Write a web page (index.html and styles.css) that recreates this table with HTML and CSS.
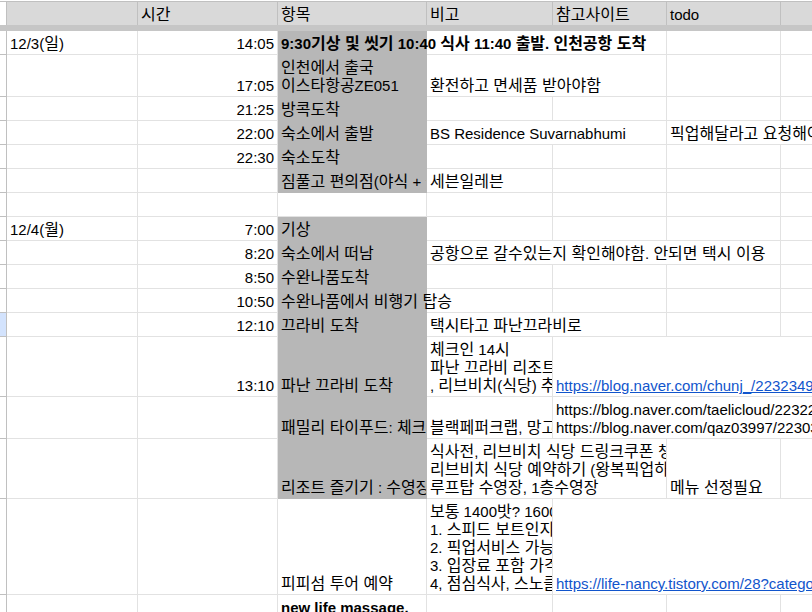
FILE: index.html
```html
<!DOCTYPE html>
<html lang="ko">
<head>
<meta charset="utf-8">
<title>여행 일정</title>
<link rel="stylesheet" href="styles.css">
</head>
<body>
<div class="sheet">
  <div class="row head">
    <div class="c rh"></div>
    <div class="c"></div>
    <div class="c"><span><span class="k">시간</span></span></div>
    <div class="c"><span><span class="k">항목</span></span></div>
    <div class="c"><span><span class="k">비고</span></span></div>
    <div class="c"><span><span class="k">참고사이트</span></span></div>
    <div class="c"><span>todo</span></div>
    <div class="c"></div>
  </div>
  <div class="band"></div>

  <div class="row">
    <div class="c rh"></div>
    <div class="c"><span>12/3(<span class="k">일</span>)</span></div>
    <div class="c r"><span>14:05</span></div>
    <div class="c f b ov"><span>9:30<span class="k">기상 및 씻기</span> 10:40 <span class="k">식사</span> 11:40 <span class="k">출발</span>. <span class="k">인천공항 도착</span></span></div>
    <div class="c s2"></div>
    <div class="c"></div>
    <div class="c"></div>
  </div>

  <div class="row l2">
    <div class="c rh"></div>
    <div class="c"></div>
    <div class="c r"><span>17:05</span></div>
    <div class="c f"><span><span class="k">인천에서 출국</span><br><span class="k">이스타항공</span>ZE051</span></div>
    <div class="c s2"><span><span class="k">환전하고 면세품 받아야함</span></span></div>
    <div class="c"></div>
    <div class="c"></div>
  </div>

  <div class="row">
    <div class="c rh"></div>
    <div class="c"></div>
    <div class="c r"><span>21:25</span></div>
    <div class="c f"><span><span class="k">방콕도착</span></span></div>
    <div class="c"></div>
    <div class="c"></div>
    <div class="c"></div>
    <div class="c"></div>
  </div>

  <div class="row">
    <div class="c rh"></div>
    <div class="c"></div>
    <div class="c r"><span>22:00</span></div>
    <div class="c f"><span><span class="k">숙소에서 출발</span></span></div>
    <div class="c s2"><span>BS Residence Suvarnabhumi</span></div>
    <div class="c s2"><span><span class="k">픽업해달라고 요청해야함</span></span></div>
  </div>

  <div class="row">
    <div class="c rh"></div>
    <div class="c"></div>
    <div class="c r"><span>22:30</span></div>
    <div class="c f"><span><span class="k">숙소도착</span></span></div>
    <div class="c"></div>
    <div class="c"></div>
    <div class="c"></div>
    <div class="c"></div>
  </div>

  <div class="row">
    <div class="c rh"></div>
    <div class="c"></div>
    <div class="c r"></div>
    <div class="c f"><span><span class="k">짐풀고 편의점</span>(<span class="k">야식</span> + <span class="k">물</span>)</span></div>
    <div class="c"><span><span class="k">세븐일레븐</span></span></div>
    <div class="c"></div>
    <div class="c"></div>
    <div class="c"></div>
  </div>

  <div class="row">
    <div class="c rh"></div>
    <div class="c"></div>
    <div class="c"></div>
    <div class="c"></div>
    <div class="c"></div>
    <div class="c"></div>
    <div class="c"></div>
    <div class="c"></div>
  </div>

  <div class="row">
    <div class="c rh"></div>
    <div class="c"><span>12/4(<span class="k">월</span>)</span></div>
    <div class="c r"><span>7:00</span></div>
    <div class="c f"><span><span class="k">기상</span></span></div>
    <div class="c"></div>
    <div class="c"></div>
    <div class="c"></div>
    <div class="c"></div>
  </div>

  <div class="row">
    <div class="c rh"></div>
    <div class="c"></div>
    <div class="c r"><span>8:20</span></div>
    <div class="c f"><span><span class="k">숙소에서 떠남</span></span></div>
    <div class="c s3"><span><span class="k">공항으로 갈수있는지 확인해야함</span>. <span class="k">안되면 택시 이용</span></span></div>
    <div class="c"></div>
  </div>

  <div class="row">
    <div class="c rh"></div>
    <div class="c"></div>
    <div class="c r"><span>8:50</span></div>
    <div class="c f"><span><span class="k">수완나품도착</span></span></div>
    <div class="c"></div>
    <div class="c"></div>
    <div class="c"></div>
    <div class="c"></div>
  </div>

  <div class="row">
    <div class="c rh"></div>
    <div class="c"></div>
    <div class="c r"><span>10:50</span></div>
    <div class="c f ov"><span><span class="k">수완나품에서 비행기 탑승</span></span></div>
    <div class="c"></div>
    <div class="c"></div>
    <div class="c"></div>
    <div class="c"></div>
  </div>

  <div class="row">
    <div class="c rh sel"></div>
    <div class="c"></div>
    <div class="c r"><span>12:10</span></div>
    <div class="c f"><span><span class="k">끄라비 도착</span></span></div>
    <div class="c s2"><span><span class="k">택시타고 파난끄라비로</span></span></div>
    <div class="c"></div>
    <div class="c"></div>
  </div>

  <div class="row l3">
    <div class="c rh"></div>
    <div class="c"></div>
    <div class="c r"><span>13:10</span></div>
    <div class="c f"><span><span class="k">파난 끄라비 도착</span></span></div>
    <div class="c"><span><span class="k">체크인</span> 14<span class="k">시</span><br><span class="k">파난 끄라비 리조트 체크인</span><br>, <span class="k">리브비치</span>(<span class="k">식당</span>) <span class="k">추천</span></span></div>
    <div class="c s3"><span><a class="lnk" href="#">https://blog.naver.com/chunj_/223234953812</a></span></div>
  </div>

  <div class="row l2">
    <div class="c rh"></div>
    <div class="c"></div>
    <div class="c"></div>
    <div class="c f"><span><span class="k">패밀리 타이푸드</span>: <span class="k">체크인 후 점심</span></span></div>
    <div class="c"><span><span class="k">블랙페퍼크랩</span>, <span class="k">망고스틴</span></span></div>
    <div class="c s3"><span>https://blog.naver.com/taelicloud/223225345678<br>https://blog.naver.com/qaz03997/223031234567</span></div>
  </div>

  <div class="row l3">
    <div class="c rh"></div>
    <div class="c"></div>
    <div class="c"></div>
    <div class="c f"><span><span class="k">리조트 즐기기</span> : <span class="k">수영장</span>, <span class="k">해변</span></span></div>
    <div class="c s2"><span><span class="k">식사전</span>, <span class="k">리브비치 식당 드링크쿠폰 챙기기</span><br><span class="k">리브비치 식당 예약하기</span> (<span class="k">왕복픽업하기</span>)<br><span class="k">루프탑 수영장</span>, 1<span class="k">층수영장</span></span></div>
    <div class="c"><span><span class="k">메뉴 선정필요</span></span></div>
    <div class="c"></div>
  </div>

  <div class="row l5">
    <div class="c rh"></div>
    <div class="c"></div>
    <div class="c"></div>
    <div class="c"><span><span class="k">피피섬 투어 예약</span></span></div>
    <div class="c"><span><span class="k">보통</span> 1400<span class="k">밧</span>? 1600<span class="k">밧</span><br>1. <span class="k">스피드 보트인지 확인</span><br>2. <span class="k">픽업서비스 가능여부</span><br>3. <span class="k">입장료 포함 가격인지</span><br>4, <span class="k">점심식사</span>, <span class="k">스노클링 포함</span></span></div>
    <div class="c s3"><span><a class="lnk" href="#">https://life-nancy.tistory.com/28?category=1</a></span></div>
  </div>

  <div class="row l5">
    <div class="c rh"></div>
    <div class="c"></div>
    <div class="c"></div>
    <div class="c"><span><span class="b">new life massage.</span><span class="k">오일 마사지</span><br>2<span class="k">시간 코스</span><br><span class="k">예약 필요</span><br><span class="k">리조트 근처</span></span></div>
    <div class="c"></div>
    <div class="c"></div>
    <div class="c"></div>
    <div class="c"></div>
  </div>
</div>
</body>
</html>
```

FILE: styles.css
```css
* {
  box-sizing: border-box;
}

html,
body {
  margin: 0;
  background: #fff;
}

body {
  width: 812px;
  height: 612px;
  overflow: hidden;
  font: 15px/18px "Liberation Sans", "Noto Sans CJK KR", sans-serif;
  color: #000;
}

.sheet {
  padding-top: 1px;
}

.row {
  display: grid;
  grid-template-columns: 7px 131px 140px 149px 126px 114px 114px 114px;
  height: 24px;
}

.l2 { height: 42px; }
.l3 { height: 60px; }
.l5 { height: 96px; }

.c {
  min-width: 0;
  display: flex;
  flex-direction: column;
  justify-content: flex-end;
  padding: 0 3px 1px;
  border-right: 1px solid #e2e2e2;
  border-bottom: 1px solid #e2e2e2;
  overflow: hidden;
  white-space: nowrap;
}

.c > span {
  display: block;
}

.k {
  font-family: "Noto Sans CJK KR", sans-serif;
  font-size: 16px;
  line-height: 14px;
}

.r {
  text-align: right;
}

.b {
  font-weight: bold;
}

.c > span > .b {
  display: block;
}

.f {
  background: #b7b7b7;
  border-color: #b7b7b7;
}

.ov {
  overflow: visible;
  position: relative;
  z-index: 1;
}

.s2 { grid-column: span 2; }
.s3 { grid-column: span 3; }

.rh {
  padding: 0;
  background: #fff;
  border-right-color: #c0c0c0;
  border-bottom-color: #c0c0c0;
}

.rh.sel {
  background: #d3e3fd;
}

.head .c {
  background: #d9d9d9;
  border-top: 1px solid #c0c0c0;
  border-right-color: #c0c0c0;
  border-bottom: 0;
}

.head .rh {
  background: #fff;
}

.band {
  height: 6px;
  background: #c6c6c6;
}

.lnk {
  color: #1155cc;
  text-decoration: underline;
}
```
